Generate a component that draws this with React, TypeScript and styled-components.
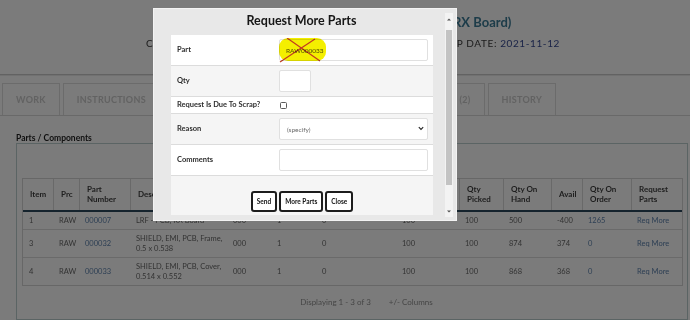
import React from "react";
import styled, { createGlobalStyle } from "styled-components";

const FONT = `Lato, "Open Sans", "Liberation Sans", sans-serif`;

const GlobalStyle = createGlobalStyle`
  html, body { margin: 0; padding: 0; }
  body { background: #f6f6f6; font-family: ${FONT}; overflow: hidden; }
  * { box-sizing: border-box; }
`;

const Page = styled.div`
  position: relative;
  width: 690px;
  height: 320px;
  overflow: hidden;
  background: #f6f6f6;
`;

/* ---------- page header ---------- */
const Header = styled.header`
  height: 75px;
  border-bottom: 1px solid #c4c4c4;
  box-shadow: 0 1px 0 #e2e2e2;
  display: flex;
  flex-direction: column;
  align-items: center;
  padding-top: 14px;
`;

const JobTitle = styled.h1`
  margin: 0;
  font-size: 13px;
  line-height: 17px;
  font-weight: 700;
  color: #3a7893;
  white-space: nowrap;
`;

const JobMeta = styled.div`
  margin: 5px 0 0 16px;
  width: 414px;
  display: flex;
  justify-content: space-between;
  font-size: 10px;
  line-height: 14px;
  letter-spacing: 0.6px;
  color: #3a3a3a;
  white-space: nowrap;
`;

const MetaValue = styled.span`
  color: #35488f;
`;

/* ---------- tabs ---------- */
const TabBar = styled.nav`
  margin-top: 8px;
  height: 33px;
  display: flex;
  gap: 3px;
  padding-left: 2px;
  border-bottom: 1px solid #d2d2d2;
`;

const Tab = styled.div`
  height: 32px;
  padding: 0 13px;
  border: 1px solid #d6d6d6;
  border-bottom: none;
  display: flex;
  align-items: center;
  font-size: 9px;
  font-weight: 700;
  letter-spacing: 0.3px;
  color: #c4c4c4;
  white-space: nowrap;
`;

/* ---------- parts panel ---------- */
const Content = styled.main`
  padding: 17px 2px 0 16px;
`;

const SectionTitle = styled.h2`
  margin: 0;
  font-size: 8.5px;
  line-height: 10px;
  font-weight: 700;
  color: #1e1e1e;
`;

const Panel = styled.section`
  height: 177px;
  border: 1px solid #b7c8c8;
  padding: 34px 4px 0 5px;
`;

const COLS = "30px 26px 51px 97px 44px 45px 80px 63px 44px 48px 31px 49px 1fr";

const Table = styled.div`
  border: 1px solid #cfcfcf;
`;

const HeadRow = styled.div`
  display: grid;
  grid-template-columns: ${COLS};
  height: 33px;
  border-bottom: 2px solid #2b475a;
`;

const HeadCell = styled.div`
  display: flex;
  align-items: center;
  padding: 0 3px 0 7px;
  font-size: 8px;
  line-height: 9.5px;
  font-weight: 700;
  color: #3e3e3e;
  & + & {
    border-left: 1px solid #d2d2d2;
  }
`;

const BodyRow = styled.div`
  display: grid;
  grid-template-columns: ${COLS};
  align-items: center;
  & + & {
    border-top: 1px solid #d4d4d4;
  }
`;

const Cell = styled.div<{ $link?: boolean }>`
  padding: 4px 2px 3px 6px;
  font-size: 7.5px;
  line-height: 10px;
  white-space: pre-line;
  color: ${(p) => (p.$link ? "#5a7ea8" : "#666666")};
`;

const Pager = styled.div`
  display: flex;
  justify-content: center;
  gap: 18px;
  padding: 11px 0 0 28px;
  font-size: 8px;
  line-height: 10px;
  color: #8c8c8c;
`;

/* ---------- modal ---------- */
const Overlay = styled.div`
  position: absolute;
  inset: 0;
  background: rgba(0, 0, 0, 0.5);
`;

const Dialog = styled.div`
  position: absolute;
  left: 153px;
  top: 8px;
  width: 304px;
  height: 213px;
  background: #e8e8e8;
  border: 1px solid #f3f3f3;
  padding: 4px 3px 3px 4px;
  display: flex;
`;

const DialogBody = styled.div`
  flex: 1;
  overflow: hidden;
  display: flex;
  flex-direction: column;
`;

const DialogTitle = styled.h3`
  margin: 0 0 6px;
  text-align: center;
  font-size: 12.5px;
  line-height: 16px;
  font-weight: 700;
  color: #161616;
`;

const Form = styled.div`
  margin: 0 12px 0 13px;
`;

const FormRow = styled.div<{ $alt?: boolean; $tight?: boolean }>`
  display: grid;
  grid-template-columns: 108px 1fr;
  align-items: center;
  padding: ${(p) => (p.$tight ? "3px 5px 3px 0" : "4px 5px 4px 0")};
  background: ${(p) => (p.$alt ? "#f5f5f5" : "#ffffff")};
  border-bottom: 1px solid #dcdcdc;
`;

const Label = styled.label`
  padding-left: 6px;
  font-size: 7.5px;
  line-height: 10px;
  font-weight: 700;
  color: #2e2e2e;
`;

const Field = styled.div`
  position: relative;
  display: flex;
  align-items: center;
`;

const TextInput = styled.input<{ $w?: number }>`
  width: ${(p) => (p.$w ? `${p.$w}px` : "100%")};
  height: 22px;
  border: 1px solid #e0e0e0;
  border-radius: 2px;
  background: #fff;
  padding: 0 6px;
  font-family: ${FONT};
  font-size: 6.5px;
  color: #555;
  outline: none;
`;

const Check = styled.input`
  appearance: none;
  margin: 0 0 0 1px;
  width: 7px;
  height: 7px;
  border: 1px solid #5a5a5a;
  border-radius: 1.5px;
  background: #fff;
`;

const Select = styled.select`
  appearance: none;
  width: 100%;
  height: 22px;
  border: 1px solid #e0e0e0;
  border-radius: 2px;
  background: #fff;
  padding: 0 7px;
  font-family: ${FONT};
  font-size: 6.5px;
  color: #6a6a6a;
  outline: none;
`;

const SelectChevron = styled.svg`
  position: absolute;
  right: 4px;
  top: 8px;
  pointer-events: none;
`;

const TextArea = styled.textarea`
  width: 100%;
  height: 22px;
  border: 1px solid #e0e0e0;
  border-radius: 2px;
  background: #fff;
  resize: none;
  outline: none;
  display: block;
`;

const Markup = styled.svg`
  position: absolute;
  left: 0;
  top: -1px;
  mix-blend-mode: multiply;
  pointer-events: none;
`;

const ButtonBar = styled.div`
  display: flex;
  justify-content: center;
  gap: 2px;
  padding: 15px 0 3px;
  background: #f5f5f5;
`;

const Button = styled.button`
  height: 21px;
  padding: 0 4px;
  border: 2px solid #1c1c1c;
  border-radius: 3px;
  background: #fff;
  font-family: ${FONT};
  font-size: 6.5px;
  font-weight: 700;
  color: #111;
`;

const ScrollTrack = styled.div`
  width: 8px;
  background: #f3f3f3;
  display: flex;
  flex-direction: column;
  align-items: center;
  padding: 4px 0 3px;
`;

const ScrollThumb = styled.div`
  width: 6px;
  height: 155px;
  margin-top: 8px;
  background: #c3c3c3;
`;

const Spacer = styled.div`
  flex: 1;
`;

type Part = {
  item: string;
  prc: string;
  num: string;
  desc: string;
  rev: string;
  per: string;
  scrap: string;
  req: string;
  picked: string;
  hand: string;
  avail: string;
  order: string;
};

const parts: Part[] = [
  { item: "1", prc: "RAW", num: "000007", desc: "LRF - PCB, RX Board", rev: "000", per: "1", scrap: "0", req: "100", picked: "100", hand: "500", avail: "-400", order: "1265" },
  { item: "3", prc: "RAW", num: "000032", desc: "SHIELD, EMI, PCB, Frame,\n0.5 x 0.538", rev: "000", per: "1", scrap: "0", req: "100", picked: "100", hand: "874", avail: "374", order: "0" },
  { item: "4", prc: "RAW", num: "000033", desc: "SHIELD, EMI, PCB, Cover,\n0.514 x 0.552", rev: "000", per: "1", scrap: "0", req: "100", picked: "100", hand: "868", avail: "368", order: "0" },
];

const headers = [
  "Item",
  "Prc",
  "Part Number",
  "Description",
  "Rev",
  "Qty Per",
  "Scrap",
  "Qty Req",
  "Qty Picked",
  "Qty On Hand",
  "Avail",
  "Qty On Order",
  "Request Parts",
];

const tabs = ["WORK", "INSTRUCTIONS", "MATERIAL", "QUALITY", "NOTES", "ATTACHMENTS (2)", "HISTORY"];

const Arrow = ({ up }: { up?: boolean }) => (
  <svg width="6" height="5" viewBox="0 0 6 5">
    <path d={up ? "M1 3.5 L3 1.5 L5 3.5 Z" : "M1 1.5 L3 3.5 L5 1.5 Z"} fill="#505050" />
  </svg>
);

export default function App() {
  return (
    <Page>
      <GlobalStyle />
      <Header>
        <JobTitle>WO21-0457: LRF Laser Rangefinder Assembly (RX Board)</JobTitle>
        <JobMeta>
          <span>CUSTOMER: LRF SYSTEMS INC.</span>
          <span>
            SHIP DATE: <MetaValue>2021-11-12</MetaValue>
          </span>
        </JobMeta>
      </Header>
      <TabBar>
        {tabs.map((t) => (
          <Tab key={t}>{t}</Tab>
        ))}
      </TabBar>
      <Content>
        <SectionTitle>Parts / Components</SectionTitle>
        <Panel>
          <Table>
            <HeadRow>
              {headers.map((h) => (
                <HeadCell key={h}>{h}</HeadCell>
              ))}
            </HeadRow>
            {parts.map((p) => (
              <BodyRow key={p.item}>
                <Cell>{p.item}</Cell>
                <Cell>{p.prc}</Cell>
                <Cell $link>{p.num}</Cell>
                <Cell>{p.desc}</Cell>
                <Cell>{p.rev}</Cell>
                <Cell>{p.per}</Cell>
                <Cell>{p.scrap}</Cell>
                <Cell>{p.req}</Cell>
                <Cell>{p.picked}</Cell>
                <Cell>{p.hand}</Cell>
                <Cell>{p.avail}</Cell>
                <Cell $link>{p.order}</Cell>
                <Cell $link>Req More</Cell>
              </BodyRow>
            ))}
          </Table>
          <Pager>
            <span>Displaying 1 - 3 of 3</span>
            <span>+/- Columns</span>
          </Pager>
        </Panel>
      </Content>

      <Overlay />
      <Dialog>
        <DialogBody>
          <DialogTitle>Request More Parts</DialogTitle>
          <Form>
            <FormRow>
              <Label>Part</Label>
              <Field>
                <TextInput defaultValue="RAW000033" readOnly />
                <Markup width="50" height="26" viewBox="0 0 50 26">
                  <rect x="0" y="0" width="47" height="23" rx="9" fill="#f4ef00" />
                  <path d="M8 0 L41 23" stroke="#c23a22" strokeWidth="1.2" fill="none" />
                  <path d="M1 24 L36 1" stroke="#c23a22" strokeWidth="1.2" fill="none" />
                </Markup>
              </Field>
            </FormRow>
            <FormRow $alt>
              <Label>Qty</Label>
              <Field>
                <TextInput $w={32} />
              </Field>
            </FormRow>
            <FormRow $tight>
              <Label>Request Is Due To Scrap?</Label>
              <Field>
                <Check type="checkbox" />
              </Field>
            </FormRow>
            <FormRow $alt>
              <Label>Reason</Label>
              <Field>
                <Select defaultValue="">
                  <option value="">(specify)</option>
                </Select>
                <SelectChevron width="6" height="5" viewBox="0 0 6 5">
                  <path d="M0.8 1.2 L3 3.4 L5.2 1.2" stroke="#222" strokeWidth="1.1" fill="none" />
                </SelectChevron>
              </Field>
            </FormRow>
            <FormRow>
              <Label>Comments</Label>
              <Field>
                <TextArea />
              </Field>
            </FormRow>
            <ButtonBar>
              <Button>Send</Button>
              <Button>More Parts</Button>
              <Button>Close</Button>
            </ButtonBar>
          </Form>
        </DialogBody>
        <ScrollTrack>
          <Arrow up />
          <ScrollThumb />
          <Spacer />
          <Arrow />
        </ScrollTrack>
      </Dialog>
    </Page>
  );
}
